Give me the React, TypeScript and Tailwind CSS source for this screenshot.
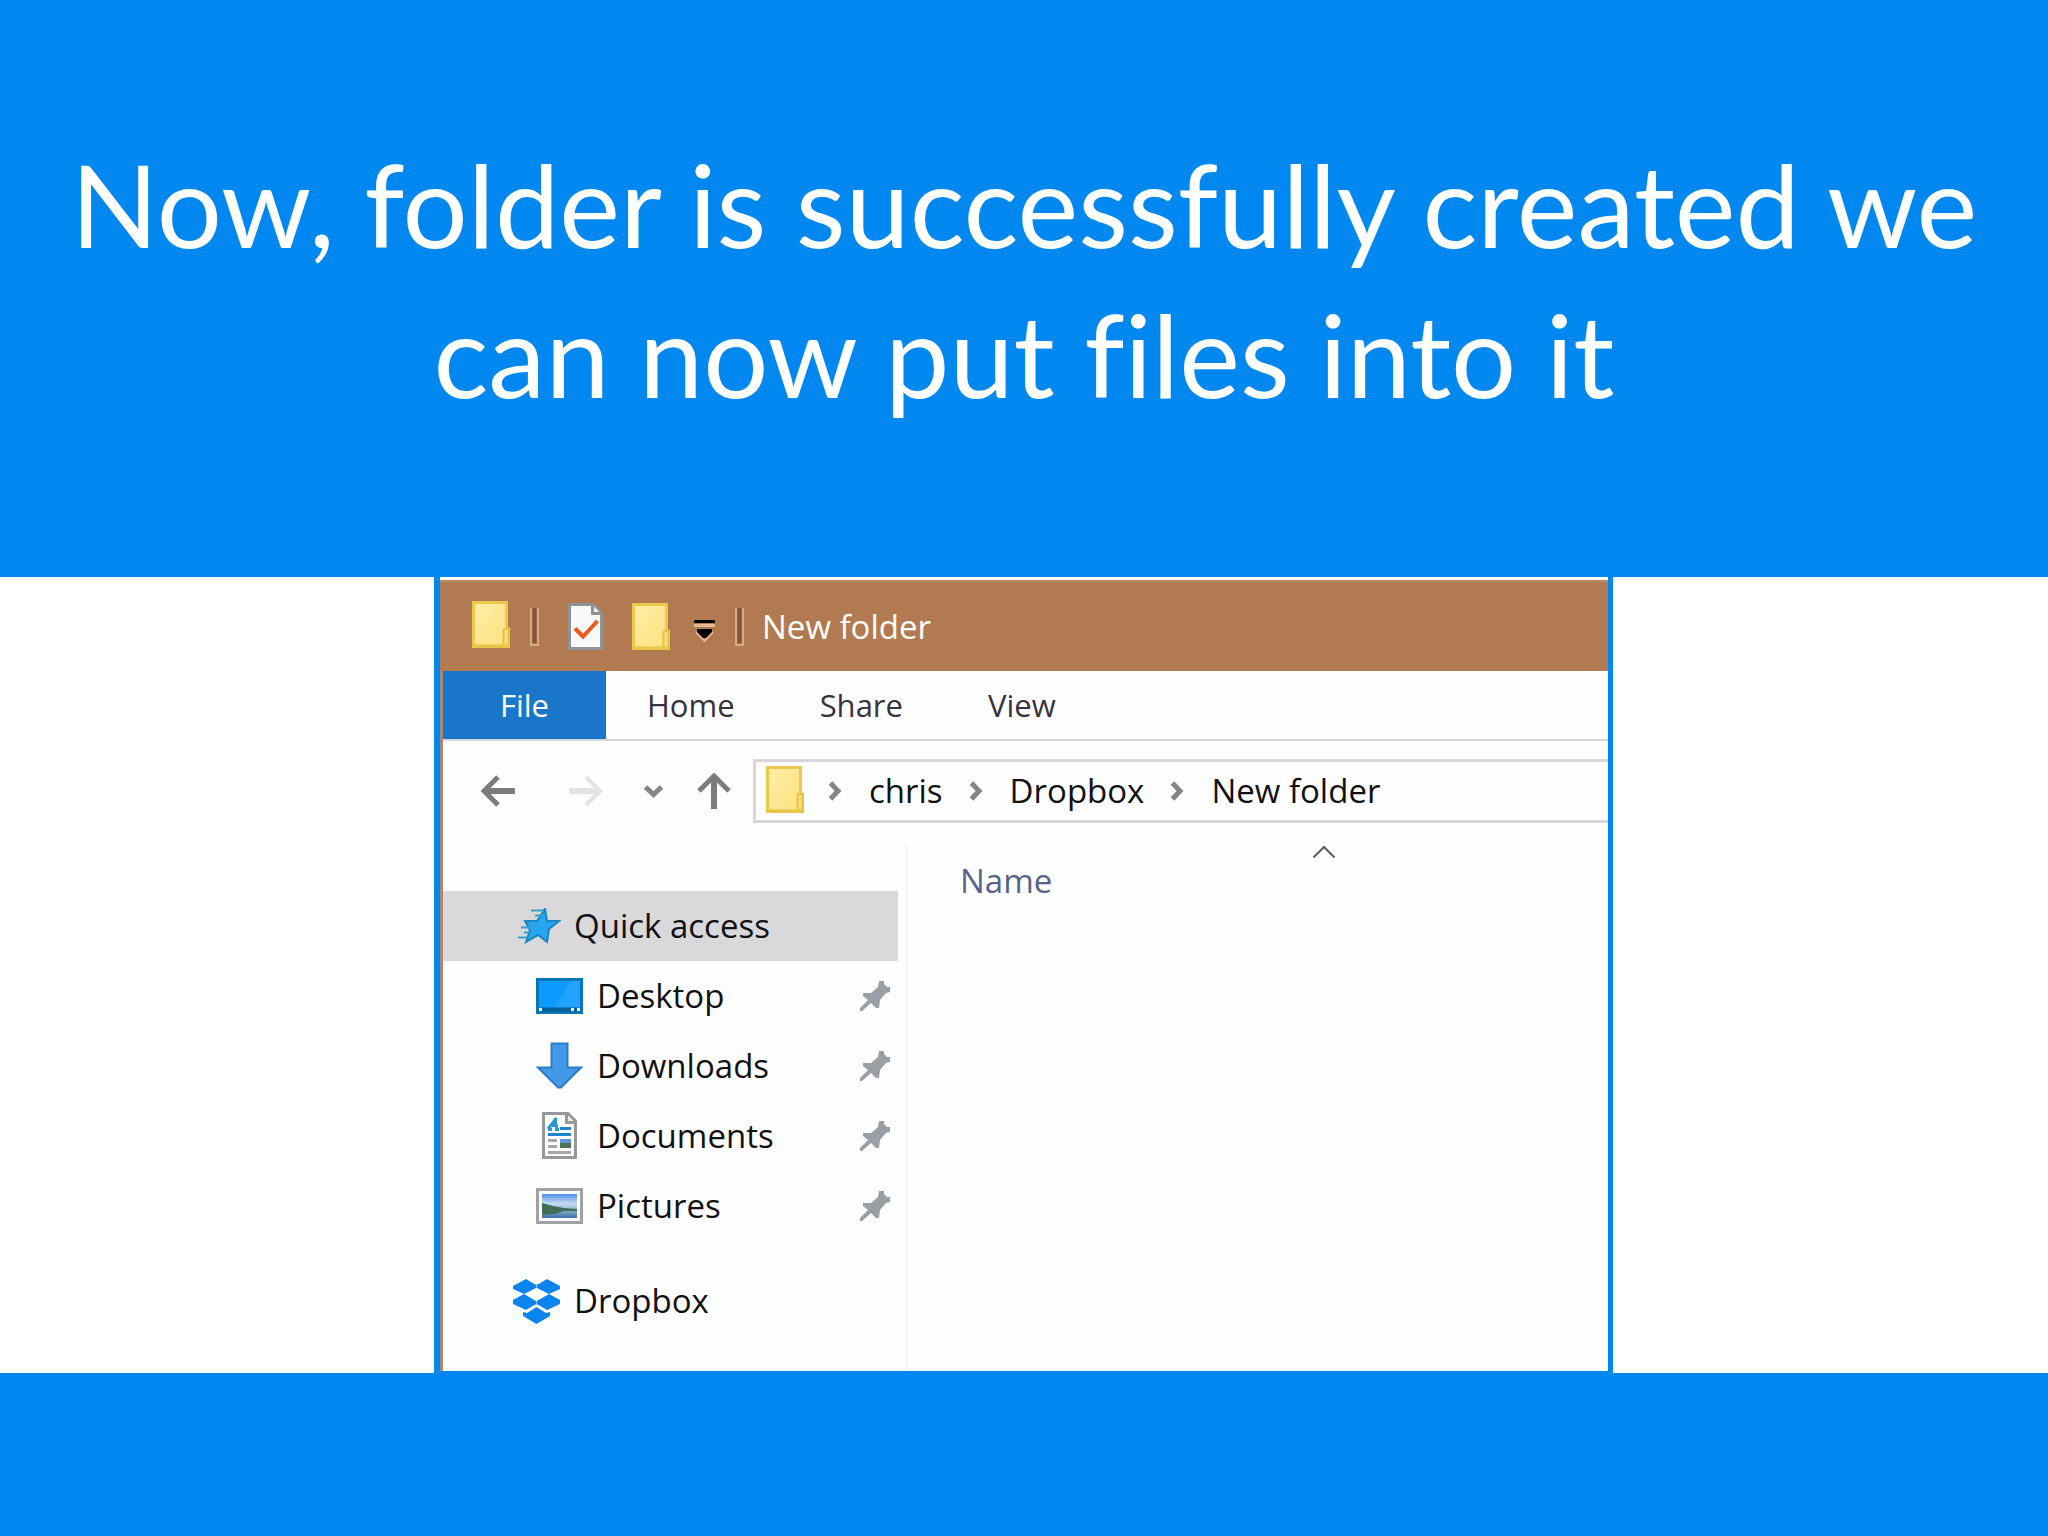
import type { ReactNode } from 'react';

function FolderIcon() {
  return (
    <svg width="38" height="47" viewBox="0 0 38 47" className="shrink-0" aria-hidden="true">
      <defs>
        <linearGradient id="folderFill" x1="0" y1="0" x2="1" y2="1">
          <stop offset="0" stopColor="#ffedaa" />
          <stop offset="1" stopColor="#ffe17c" />
        </linearGradient>
      </defs>
      <path d="M1.5 1.5H34.5V28H36.5V45.5H1.5Z" fill="url(#folderFill)" stroke="#ecc94b" strokeWidth="3" />
      <path d="M31.5 45V29.5Q31.5 28 33 28H35Q36.5 28 36.5 29.5V45Z" fill="#ffe17c" stroke="#e6c145" strokeWidth="2" />
      <path d="M1 45H37" stroke="#e8c448" strokeWidth="3" />
    </svg>
  );
}

function PropertiesIcon() {
  return (
    <svg width="35" height="47" viewBox="0 0 35 47" aria-hidden="true">
      <path d="M1.5 1.5H25L33.5 10V45.5H1.5Z" fill="#fafafa" stroke="#8f9295" strokeWidth="3" />
      <path d="M24.5 2V10.5H33" fill="#eeeeee" stroke="#8f9295" strokeWidth="3" />
      <path d="M7 25.5L15 33.5L29.5 18" fill="none" stroke="#ee5a1c" strokeWidth="4" />
    </svg>
  );
}

function Separator() {
  return (
    <svg width="9" height="40" viewBox="0 0 9 40" className="shrink-0" aria-hidden="true">
      <path d="M1 1V38H8V1" fill="none" stroke="#d9a781" strokeWidth="2" />
      <path d="M4.5 1V36" stroke="#7d5540" strokeWidth="4" />
    </svg>
  );
}

function CustomizeIcon() {
  return (
    <svg width="21" height="22" viewBox="0 0 21 22" aria-hidden="true">
      <path d="M0 1.5H21" stroke="#000" strokeWidth="3" />
      <path d="M0 5.5H21" stroke="#e8b997" strokeWidth="3" />
      <path d="M2 12L10.5 21L19 12" fill="none" stroke="#e8b997" strokeWidth="2" />
      <path d="M3 9H18V12L12 18H9L3 12Z" fill="#000" />
    </svg>
  );
}

function BackIcon() {
  return (
    <svg width="35" height="32" viewBox="0 0 35 32" fill="none" stroke="currentColor" strokeWidth="5" aria-hidden="true">
      <path d="M34 16H4" strokeWidth="6" />
      <path d="M17 2L3 16L17 30" />
    </svg>
  );
}

function ForwardIcon() {
  return (
    <svg width="35" height="32" viewBox="0 0 35 32" fill="none" stroke="currentColor" strokeWidth="4" aria-hidden="true">
      <path d="M1 16H31" strokeWidth="6" />
      <path d="M18 2L32 16L18 30" />
    </svg>
  );
}

function UpIcon() {
  return (
    <svg width="34" height="36" viewBox="0 0 34 36" fill="none" stroke="currentColor" strokeWidth="5" aria-hidden="true">
      <path d="M17 36V4" strokeWidth="6" />
      <path d="M2 18L17 3L32 18" />
    </svg>
  );
}

function RecentIcon() {
  return (
    <svg width="19" height="13" viewBox="0 0 19 13" aria-hidden="true">
      <path d="M1.5 2L9.5 9.5L17.5 2" fill="none" stroke="#858589" strokeWidth="5" />
    </svg>
  );
}

function CrumbArrow() {
  return (
    <svg width="14" height="20" viewBox="0 0 14 20" className="shrink-0" aria-hidden="true">
      <path d="M2.5 2L10 10L2.5 18" fill="none" stroke="#858585" strokeWidth="5" />
    </svg>
  );
}

function StarIcon() {
  return (
    <svg width="44" height="36" viewBox="0 0 44 36" aria-hidden="true">
      <path
        d="M28 1L30 13H42L32 21L30 34L21 27L9 34L13 22L8 13H20Z"
        fill="#27a5ef"
        stroke="#1a87c4"
        strokeWidth="2"
      />
      <path d="M14 2.5H27M18 7.5H26M4 19.5H13M7 24.5H12M1 29.5H10" stroke="#3a9dcb" strokeWidth="2" />
    </svg>
  );
}

function DesktopIcon() {
  return (
    <svg width="47" height="36" viewBox="0 0 47 36" aria-hidden="true">
      <rect x="1.5" y="1.5" width="44" height="33" fill="#0e9bff" stroke="#0b74b8" strokeWidth="3" />
      <path d="M18 30L35 3H44V30Z" fill="#22a3ff" />
      <path d="M3 31.5H44" stroke="#075f9c" strokeWidth="4" />
      <path d="M3 31.5H6M35 31.5H38M41 31.5H44" stroke="#fff" strokeWidth="3" />
    </svg>
  );
}

function DownloadIcon() {
  return (
    <svg width="47" height="48" viewBox="0 0 47 48" aria-hidden="true">
      <path d="M15.5 1.5H31.5V25.5H45L25 45.5H22L2 25.5H15.5Z" fill="#4199e8" stroke="#2a7cc4" strokeWidth="2" />
    </svg>
  );
}

function DocumentIcon() {
  return (
    <svg width="47" height="48" viewBox="0 0 47 48" aria-hidden="true">
      <path d="M7.5 1.5H32L39.5 9V45.5H7.5Z" fill="#fff" stroke="#98989a" strokeWidth="3" />
      <path d="M30.5 2V10.5H39" fill="#eee" stroke="#98989a" strokeWidth="3" />
      <path d="M12 17L19 8L21 17M15 13.5H21M12 17.5H16M19 17.5H23M18 7.5H21" fill="none" stroke="#2596d8" strokeWidth="3" />
      <path d="M24 16.5H35M12 22.5H35" stroke="#1c87cf" strokeWidth="3" />
      <path d="M12 28.5H21M12 34.5H21M12 40.5H35" stroke="#a7a7a9" strokeWidth="3" />
      <rect x="24" y="27" width="11" height="5" fill="#5d96df" />
      <rect x="24" y="31" width="11" height="5" fill="#4e7654" />
    </svg>
  );
}

function PictureIcon() {
  return (
    <svg width="47" height="36" viewBox="0 0 47 36" aria-hidden="true">
      <defs>
        <linearGradient id="sky" x1="0" y1="0" x2="0" y2="1">
          <stop offset="0" stopColor="#4f8eea" />
          <stop offset="0.4" stopColor="#c4dcf4" />
          <stop offset="0.65" stopColor="#94b4cc" />
          <stop offset="1" stopColor="#3c71ab" />
        </linearGradient>
      </defs>
      <rect x="1.5" y="1.5" width="44" height="33" fill="#fff" stroke="#a0a1a3" strokeWidth="3" />
      <rect x="6" y="6" width="35" height="24" fill="url(#sky)" />
      <path d="M6 15L17 18L28 20L41 21V23H28L19 26L6 27Z" fill="#426e59" />
    </svg>
  );
}

function DropboxIcon() {
  return (
    <svg width="47" height="45" viewBox="0 0 47 45" fill="#0a84ee" aria-hidden="true">
      <path d="M13 0L23 6V9L11 15L0 10V7Z" />
      <path d="M34 0L24 6V9L36 15L47 10V7Z" />
      <path d="M11 15L23 22V25L13 31L0 25V21Z" />
      <path d="M36 15L24 22V25L34 31L47 25V21Z" />
      <path d="M10 33L14 34L23.5 28L33 34L37 33V37L23.5 45L10 37Z" />
      <path d="M15 5H32V9H15ZM15 22H32V26H15Z" opacity="0.4" />
    </svg>
  );
}

function PinIcon() {
  return (
    <svg width="30" height="30" viewBox="0 0 30 30" aria-hidden="true">
      <path
        d="M19 0H24V3L27 6H30V11L26 12L20 19L19 27H16L11 22L2 30H0V27L8 19L3 15V12H11L18 6Z"
        fill="#9a9fa5"
      />
    </svg>
  );
}

const tabs = ['Home', 'Share', 'View'];

const crumbs = ['chris', 'Dropbox', 'New folder'];

const pinned: { label: string; icon: ReactNode }[] = [
  { label: 'Desktop', icon: <DesktopIcon /> },
  { label: 'Downloads', icon: <DownloadIcon /> },
  { label: 'Documents', icon: <DocumentIcon /> },
  { label: 'Pictures', icon: <PictureIcon /> },
];

function TitleBar() {
  return (
    <div className="flex h-[91px] items-center border-t-2 border-[#b58a63] bg-[#b27a50] pl-8 text-white">
      <span className="pb-1">
        <FolderIcon />
      </span>
      <div className="ml-5 flex items-center">
        <Separator />
        <button aria-label="Properties" className="ml-[29px]">
          <PropertiesIcon />
        </button>
        <button aria-label="Create folder" className="ml-[29px]">
          <FolderIcon />
        </button>
        <button aria-label="Customize toolbar" className="ml-6 pt-2">
          <CustomizeIcon />
        </button>
      </div>
      <div className="ml-5 flex items-center">
        <Separator />
        <h2 className="ml-[18px] text-[33px] leading-10">New folder</h2>
      </div>
    </div>
  );
}

function Ribbon() {
  return (
    <nav className="flex h-[70px] border-b-2 border-[#d6d6da] text-[31px] text-[#38323c]">
      <button className="w-[163px] bg-[#1976c9] text-white">File</button>
      <div className="flex gap-[85px] pl-[41px]">
        {tabs.map(tab => (
          <button key={tab}>{tab}</button>
        ))}
      </div>
    </nav>
  );
}

function AddressRow() {
  return (
    <div className="flex items-center pt-[18px] text-[#7c7c80]">
      <button aria-label="Back" className="ml-[38px]">
        <BackIcon />
      </button>
      <button aria-label="Forward" className="ml-[52px] text-[#e2e2e4]">
        <ForwardIcon />
      </button>
      <button aria-label="Recent locations" className="ml-[41px]">
        <RecentIcon />
      </button>
      <button aria-label="Up" className="ml-[34px]">
        <UpIcon />
      </button>
      <div className="ml-[22px] flex h-16 flex-1 items-center border-y-[3px] border-l-[3px] border-[#d6d6da] pl-[10px] text-[33px] text-[#111]">
        <span className="pb-1">
          <FolderIcon />
        </span>
        <ol className="flex items-center pl-6">
          {crumbs.map(crumb => (
            <li key={crumb} className="flex items-center">
              <CrumbArrow />
              <a href="#" className="mr-[26px] ml-[27px] whitespace-nowrap">
                {crumb}
              </a>
            </li>
          ))}
        </ol>
      </div>
    </div>
  );
}

function Sidebar() {
  return (
    <aside className="w-[465px] border-r-[3px] border-[#f6f5f8] pt-[46px] pb-[35px] text-[33px] text-[#111]">
      <a href="#" className="mr-[7px] flex h-[70px] items-center bg-[#d9d8da] pl-[74px]">
        <StarIcon />
        <span className="ml-[13px]">Quick access</span>
      </a>
      <ul>
        {pinned.map(item => (
          <li key={item.label}>
            <a href="#" className="flex h-[70px] items-center pr-[15px] pl-[93px]">
              {item.icon}
              <span className="ml-[14px] flex-1">{item.label}</span>
              <PinIcon />
            </a>
          </li>
        ))}
      </ul>
      <a href="#" className="mt-[25px] flex h-[70px] items-center pl-[70px]">
        <DropboxIcon />
        <span className="ml-[14px]">Dropbox</span>
      </a>
    </aside>
  );
}

function FileList() {
  return (
    <div className="min-w-0 flex-1 overflow-hidden">
      <table className="w-[832px]">
        <thead>
          <tr>
            <th aria-sort="ascending" className="p-0 text-left font-normal">
              <svg width="24" height="14" viewBox="0 0 24 14" className="mx-auto" aria-hidden="true">
                <path d="M1.5 12.5L12 2L22.5 12.5" fill="none" stroke="#5c5c5e" strokeWidth="2" />
              </svg>
              <button className="ml-[52px] text-[33px] leading-[44px] text-[#56648a]">Name</button>
            </th>
          </tr>
        </thead>
      </table>
    </div>
  );
}

export default function App() {
  return (
    <div className="min-h-screen bg-[#0088f0]">
      <h1 className="px-12 pt-[128px] pb-[149px] text-center font-['Lato',sans-serif] text-[115px] leading-[150px] text-white [font-variant-ligatures:none]">
        Now, folder is successfully created we can now put files into it
      </h1>

      <main className="grid grid-cols-[434fr_1179fr_435fr] font-['Open_Sans',sans-serif]">
        <div className="bg-white" />
        <section className="min-w-0 pr-[5px] pb-[2px] pl-[6px]">
          <div className="border-t-[3px] border-white">
            <TitleBar />
            <div className="border-l-[3px] border-[#b08468] bg-[#fefefe]">
              <Ribbon />
              <AddressRow />
              <div className="mt-[22px] flex">
                <Sidebar />
                <FileList />
              </div>
            </div>
          </div>
        </section>
        <div className="bg-white" />
      </main>
    </div>
  );
}
